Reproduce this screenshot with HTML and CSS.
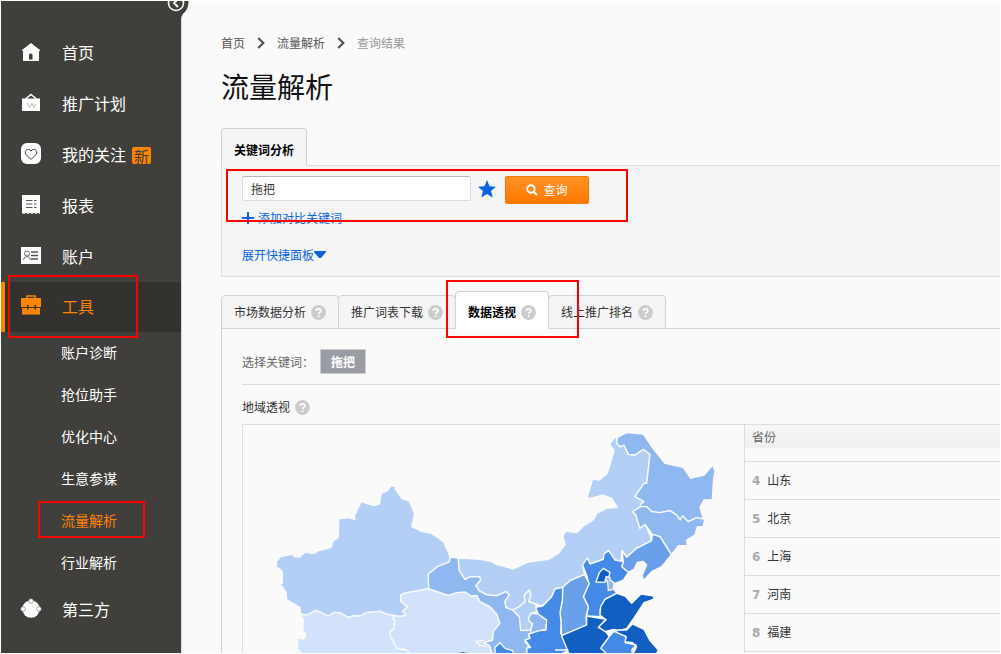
FILE: index.html
```html
<!DOCTYPE html>
<html lang="zh-CN">
<head>
<meta charset="utf-8">
<title>流量解析</title>
<link rel="stylesheet" href="styles.css">
</head>
<body>
<svg class="defs" aria-hidden="true">
  <symbol id="help" viewBox="0 0 15 15"><circle cx="7.500" cy="7.500" r="7.400" fill="#ccc"/><path d="M5.200 5.700C5.300 3.200 9.900 3.200 9.900 5.700C9.900 7.300 7.600 7.200 7.600 9M7.600 10.300V12" fill="none" stroke="#fff" stroke-width="1.600"/></symbol>
  <symbol id="chevron" viewBox="0 0 8 12"><path d="M1.200 1L6.300 6L1.200 11" fill="none" stroke="#555" stroke-width="2.200"/></symbol>
</svg>
<div class="app">
  <aside class="sidebar">
    <button class="collapse" aria-label="收起">
      <svg viewBox="0 0 30 19" width="30" height="19"><path d="M0 0H29.500C29.500 7 27 10 24 13Q22 15 22 19H0Z" fill="#403f3b"/><circle cx="17" cy="2" r="7.500" fill="none" stroke="#fff" stroke-width="1.600"/><path d="M19-2L15 2L19 6" fill="none" stroke="#fff" stroke-width="2"/></svg>
    </button>
    <nav>
      <ul class="menu">
        <li><a class="item" href="#"><svg class="icon" viewBox="0 0 22 22"><path d="M11 2L20 9V10H19V20H3V10H2V9Z" fill="#fff"/><path d="M9 18.500V13.500Q11 11.500 12.500 13.500V18.500Z" fill="#403f3b"/></svg><span>首页</span></a></li>
        <li><a class="item" href="#"><svg class="icon" viewBox="0 0 22 22"><path d="M5.500 7L11 2.500L16.500 7" fill="none" stroke="#fff" stroke-width="1.500"/><path d="M2 6.500H20V19H2Z" fill="#fff"/><path d="M7 11L9.500 15.500L12 11.500L14 15.500L16 12" fill="none" stroke="#b5b5b0"/></svg><span>推广计划</span></a></li>
        <li><a class="item" href="#"><svg class="icon" viewBox="0 0 22 22"><rect x="1" y="0" width="20" height="21" rx="6" fill="#fff"/><path d="M11 16.500L6 11.500C3.500 8 8 4 11 8C14 4 18.500 8 16 11.500Z" fill="none" stroke="#403f3b"/></svg><span>我的关注</span><span class="new">新</span></a></li>
        <li><a class="item" href="#"><svg class="icon" viewBox="0 0 22 22"><path d="M2 1H20V20L18 18.800L16 20L14 18.800L12 20L10 18.800L8 20L6 18.800L4 20L2 19Z" fill="#fff"/><path d="M6 6.500H12.500M6 10H12.500M6 13.500H12.500M14 6.500H16.500M14 10H16.500M14 13.500H16.500" stroke="#555"/></svg><span>报表</span></a></li>
        <li><a class="item" href="#"><svg class="icon" viewBox="0 0 22 22"><path d="M1 2H21V19H1Z" fill="#fff"/><circle cx="7" cy="8.500" r="2.500" fill="none" stroke="#666"/><path d="M3.500 15Q4 11.500 7 11.500T10.500 15" fill="none" stroke="#666"/><path d="M11 7H18M11 10.500H18M11 14H18" stroke="#555" stroke-width="1.300"/></svg><span>账户</span></a></li>
        <li><a class="item current" href="#"><svg class="icon" viewBox="0 0 22 22"><path d="M7 4V1H15V4" fill="none" stroke="#ff8400" stroke-width="1.500"/><path d="M1 3H21V12H16V10H14.500V12H8.500V10H7V12H1ZM2 13H7V14.500H8.500V13H14.500V14.500H16V13H20V19.500H2Z" fill="#ff8400"/></svg><span>工具</span></a>
          <ul class="submenu">
            <li><a href="#">账户诊断</a></li>
            <li><a href="#">抢位助手</a></li>
            <li><a href="#">优化中心</a></li>
            <li><a href="#">生意参谋</a></li>
            <li><a class="on" href="#">流量解析</a></li>
            <li><a href="#">行业解析</a></li>
          </ul>
        </li>
        <li><a class="item" href="#"><svg class="icon" viewBox="0 0 22 22"><circle cx="11" cy="11" r="8.700" fill="#fff"/><g fill="#fff" stroke="#777" stroke-width=".6"><circle cx="11" cy="3" r="2.300"/><circle cx="3" cy="11" r="2.300"/><circle cx="19" cy="11" r="2.300"/></g></svg><span>第三方</span></a></li>
      </ul>
    </nav>
  </aside>

  <main class="main">
    <nav class="crumbs">
      <a href="#">首页</a><svg width="8" height="12"><use href="#chevron"/></svg><a href="#">流量解析</a><svg width="8" height="12"><use href="#chevron"/></svg><span>查询结果</span>
    </nav>
    <h1>流量解析</h1>

    <button class="tab-main">关键词分析</button>
    <section class="search">
      <form class="query">
        <input type="text" value="拖把" aria-label="关键词">
        <svg class="star" viewBox="0 0 18 18"><path d="M9 0L11.500 6.300L18 6.700L13 10.900L14.700 17.500L9 13.900L3.300 17.500L5 10.900L0 6.700L6.500 6.300Z" fill="#0a63e0"/></svg>
        <button type="button" class="go"><svg width="12" height="12" viewBox="0 0 12 12"><circle cx="5" cy="5" r="3.700" fill="none" stroke="#fff" stroke-width="2"/><path d="M7.500 7.500L11 11" stroke="#fff" stroke-width="2.200"/></svg>查询</button>
      </form>
      <a class="add" href="#"><svg width="12" height="12" viewBox="0 0 12 12"><path d="M6 0V12M0 6H12" stroke="#0a63e0" stroke-width="2"/></svg>添加对比关键词</a>
      <a class="expand" href="#">展开快捷面板<svg width="12" height="8" viewBox="0 0 12 8"><path d="M0 0H12V1L7 7H5L0 1Z" fill="#0a63e0"/></svg></a>
    </section>

    <div class="tabs">
      <button>市场数据分析<svg><use href="#help"/></svg></button>
      <button>推广词表下载<svg><use href="#help"/></svg></button>
      <button class="active">数据透视<svg><use href="#help"/></svg></button>
      <button>线上推广排名<svg><use href="#help"/></svg></button>
    </div>
    <section class="panel">
      <div class="choose"><span>选择关键词：</span><button>拖把</button></div>
      <h2>地域透视<svg><use href="#help"/></svg></h2>
      <div class="region">
        <div class="mapbox">
          <svg class="map" viewBox="9 15 1500 684" role="img" aria-label="中国地图">
            <g transform="translate(720 0)" stroke="#fafafa" stroke-width="4" stroke-linejoin="round">
              <path fill="#b3cff5" d="M-539 582L-520 586L-492 571L-478 577L-455 588L-437 577L-418 579L-395 593L-380 588L-360 588L-340 578L-300 574L-275 584L-254 587L-240 590L-222 585L-232 574L-218 561L-238 543L-238 526L-228 520L-154 506L-155 462L-128 440L-92 426L-89 411L-110 364L-145 340L-175 334L-205 320L-196 282L-212 243L-234 236L-254 207L-253 200L-267 197L-278 213L-296 219L-302 252L-320 257L-356 244L-377 288L-375 298L-395 293L-432 297L-424 300L-425 352L-442 364L-446 382L-485 392L-500 401L-525 396L-540 411L-558 410L-562 402L-598 410L-610 424L-612 442L-602 445L-593 456L-593 490L-608 494L-596 497L-581 518L-581 538L-540 563Z"/>
              <path fill="#d2e2fb" d="M-539 582L-520 586L-492 571L-478 577L-455 588L-437 577L-418 579L-395 593L-380 588L-360 588L-340 578L-300 574L-275 584L-254 587L-262 596L-255 600L-260 628L-270 634L-270 645L-250 684L-220 690L-205 710H-530L-548 686L-546 660L-550 652L-532 657L-524 654L-524 640L-532 630L-530 600Z"/>
              <path fill="#d2e2fb" d="M-154 506L-95 526L-70 518L-45 516L-25 528L-10 526L0 545L30 562L50 582L60 610L45 635L40 660L12 668L30 678L35 710H-205L-220 690L-250 684L-270 645L-270 634L-260 628L-255 600L-262 596L-254 587L-240 590L-222 585L-232 574L-218 561L-238 543L-238 526L-228 520Z"/>
              <path fill="#8fb7f0" d="M-89 411L-65 414L-63 450L-45 478L-30 470L0 470L2 480L-12 497L-2 512L20 524L50 527L78 514L88 524L75 545L78 562L98 570L118 590L125 630L155 625L200 632L145 642L150 660L135 665L145 675L138 710H40L28 676L12 668L38 660L40 635L60 610L50 582L30 560L0 545L-10 526L-25 528L-45 516L-70 518L-95 526L-154 506L-155 462L-128 440L-92 426Z"/>
              <path fill="#b3cff5" d="M-65 414L-63 450L-45 478L-30 470L0 470L2 480L-12 497L-2 512L20 524L50 527L78 514L88 524L75 545L78 562L98 570L118 560L135 545L133 525L148 510L152 525L146 545L165 552L188 558L215 530L225 507L248 502L270 482L313 464L308 435L322 414L330 432L370 418L372 402L386 392L405 420L423 424L426 392L440 412L470 385L515 362L510 345L495 313L480 325L472 300L468 285L458 275L480 265L482 255L492 245L465 230L492 190H500L510 103L490 88L465 105L445 103L432 75L420 80L410 70L412 54L405 52L388 72L402 92L385 150L380 162L358 180L338 177L322 230L328 236L370 225L395 235L412 262L380 265L350 280L340 300L310 318L290 338L258 333L248 348L256 373L235 400L205 418L145 426L100 447L50 433L30 423L0 418Z"/>
              <path fill="#b3cff5" d="M98 570L118 560L135 545L133 525L148 510L152 525L146 545L167 552L170 575L152 580L145 600L158 612L152 630L122 632L118 590Z"/>
              <path fill="#8fb7f0" d="M152 580L175 582L200 600L198 630L178 632L155 642L152 630L158 612L145 600Z"/>
              <path fill="#8fb7f0" d="M412 52L440 38L490 42L515 80L555 130L610 142L632 175L672 165L698 136L705 152L700 185L697 240H672L660 262L670 297L650 293L625 305L608 288L600 300L590 285L570 272L540 278L515 275L500 260H482V252L492 245L465 230L492 190H500L510 103L490 88L465 105L445 103L432 75L420 80L410 70Z"/>
              <path fill="#8fb7f0" d="M482 260H500L515 275L540 278L570 272L590 285L600 300L608 288L625 305L650 293L674 298L670 320L652 320L645 345L620 360L622 376L595 377L574 404L540 350L517 343L495 313L480 325L472 300L468 285L458 275Z"/>
              <path fill="#6aa0ea" d="M517 343L540 350L574 404L545 440L515 455L490 482L487 465L500 435L490 424L472 427L462 448L445 457L425 440L430 425L426 392L440 412L470 385L515 362Z"/>
              <path fill="#458ae6" d="M308 435L322 414L330 432L370 418L372 402L386 392L405 420L430 425L425 440L445 457L430 480L405 490L402 508L410 520L375 538L360 570L362 590L320 588L325 560L310 530L325 495L322 470Z"/>
              <path fill="#125fc2" d="M370 445L390 457L386 472L376 478L375 487L348 486L358 458Z"/>
              <path fill="#8fb7f0" d="M378 470L390 472V480L402 488L400 508L385 512L383 485L378 480Z"/>
              <path fill="#6aa0ea" d="M248 502L270 482L313 464L328 490L310 530L325 560L318 590L320 615L245 647L243 605L240 578L247 540Z"/>
              <path fill="#458ae6" d="M225 507L248 502L247 540L240 578L243 605L242 640L265 692L225 710H142L140 685L152 682L135 660L150 655L147 642L178 632L198 630L200 600L175 582L167 562L188 558L215 530Z"/>
              <path fill="#125fc2" d="M410 520L435 528L455 550L483 522L522 528L520 538L492 548L460 597L440 625L420 632L400 628L375 635L355 620L378 600L360 585L362 560L375 538Z"/>
              <path fill="#125fc2" d="M320 588L378 598L355 622L378 636L388 650L365 680L390 710H270L245 647L320 615Z"/>
              <path fill="#125fc2" d="M440 630L457 612L492 628L510 662L535 690L525 710H455L470 680L458 668L435 665L438 650L402 634L420 630Z"/>
              <path fill="#458ae6" d="M402 634L438 650L435 668L468 675L455 690L460 710H390L362 685L388 650Z"/>
              <path fill="#458ae6" d="M45 682L60 668L75 685L98 692L105 710H45Z"/>
              <path fill="#125fc2" stroke-width="2" d="M-75 705Q-50 685-30 705Z"/>
              <path fill="none" d="M12 660L-12 665L0 676L20 679M225 690H265"/>
            </g>
          </svg>
        </div>
        <table class="rank">
          <thead><tr><th>省份</th></tr></thead>
          <tbody>
            <tr class="gap"><td></td></tr>
            <tr><td><b>4</b>山东</td></tr>
            <tr><td><b>5</b>北京</td></tr>
            <tr><td><b>6</b>上海</td></tr>
            <tr><td><b>7</b>河南</td></tr>
            <tr><td><b>8</b>福建</td></tr>
            <tr><td></td></tr>
          </tbody>
        </table>
      </div>
    </section>
  </main>
</div>
</body>
</html>
```
FILE: styles.css
```css
*, *::after { box-sizing: border-box; }
body {
  margin: 0;
  padding: 1px;
  height: 100vh;
  overflow: hidden;
  background: #fff;
  font: 12px/18px "Noto Sans CJK SC", sans-serif;
  color: #333;
}
button, input { font: inherit; color: inherit; }
button { cursor: pointer; }
a { color: inherit; text-decoration: none; }
ul { list-style: none; margin: 0; padding: 0; }
svg { flex: none; }
.defs { position: absolute; width: 0; height: 0; }
.app { display: flex; height: 100%; overflow: hidden; background: #fafafa; }

/* sidebar */
.sidebar {
  position: relative;
  flex: none;
  width: 180px;
  padding-top: 26px;
  background: #403f3b;
  color: #fff;
  box-shadow: 1px 0 1px #ddd;
}
.collapse {
  position: absolute;
  top: 0;
  right: -8px;
  padding: 0;
  border: 0;
  background: none;
  line-height: 0;
}
.item {
  position: relative;
  display: flex;
  align-items: center;
  height: 51px;
  padding: 0 0 2px 19px;
  font-size: 16px;
}
.icon { width: 22px; height: 22px; margin-right: 20px; }
.new {
  margin: 4px 0 0 6px;
  padding: 0 2px;
  border-radius: 2px;
  background: #ff8400;
  color: #403f3b;
  font-size: 15px;
  line-height: 17px;
}
.item.current {
  height: 50px;
  padding-left: 15px;
  border-left: 4px solid #ff8400;
  background: #34322e;
  color: #ff8400;
}
.item.current::after, .submenu .on::after, .search::after, .tabs .active::after {
  content: "";
  position: absolute;
  border: 2px solid #f00;
  pointer-events: none;
}
.item.current::after { left: 3px; top: -7px; width: 130px; height: 63px; }
.submenu a {
  position: relative;
  display: flex;
  align-items: center;
  height: 42px;
  padding: 0 0 3px 60px;
  font-size: 14px;
}
.submenu .on { color: #ff8400; }
.submenu .on::after { left: 37px; top: 1px; width: 107px; height: 37px; }

/* main column */
.main { flex: 1; min-width: 0; padding: 33px 0 0 40px; }
.crumbs { display: flex; align-items: center; gap: 12px; color: #555; }
.crumbs span { color: #999; }
h1 { margin: 14px 0 22px; font-size: 28px; font-weight: 400; line-height: 40px; color: #111; }
.tab-main {
  position: relative;
  z-index: 1;
  display: block;
  height: 38px;
  margin-bottom: -1px;
  padding: 4px 12px 0;
  border: 1px solid #d2d2d2;
  border-bottom: 0;
  border-radius: 4px 4px 0 0;
  background: #f5f5f5;
  color: #000;
  font-weight: 700;
}
.search {
  position: relative;
  height: 112px;
  padding: 10px 20px;
  border: 1px solid #ddd;
  border-right: 0;
  background: #f5f5f5;
}
.search::after { left: 4px; top: 3px; width: 402px; height: 53px; }
.query { display: flex; align-items: flex-start; }
.query input {
  width: 229px;
  height: 25px;
  padding: 0 8px;
  border: 1px solid #ddd;
  border-top-color: #bbb;
  border-radius: 2px;
  background: #fff;
  outline: 0;
}
.star { width: 18px; height: 18px; margin: 4px 9px 0 7px; }
.go {
  display: flex;
  align-items: center;
  justify-content: center;
  gap: 5px;
  width: 84px;
  height: 28px;
  border: 1px solid #f57900;
  border-radius: 2px;
  background: linear-gradient(#ff9227, #ff7800);
  color: #fff;
}
.add, .expand { display: flex; align-items: center; width: max-content; color: #0a63e0; }
.add { gap: 4px; margin: 5px 0 19px; }

/* report tabs */
.tabs { position: relative; z-index: 1; display: flex; align-items: flex-end; margin: 14px 0 -1px; }
.tabs button {
  position: relative;
  display: flex;
  align-items: center;
  gap: 5px;
  height: 34px;
  margin-right: -1px;
  padding: 0 12px;
  border: 1px solid #d2d2d2;
  border-radius: 4px 4px 0 0;
  background: #f5f5f5;
}
.tabs svg { width: 15px; height: 15px; }
.tabs .active {
  z-index: 1;
  height: 38px;
  padding-top: 4px;
  border-bottom-color: #fff;
  background: #fff;
  color: #000;
  font-weight: 700;
}
.tabs .active::after { left: -10px; top: -12px; width: 133px; height: 58px; }
.panel { padding: 20px 0 0 20px; border: 1px solid #d2d2d2; border-width: 1px 0 0 1px; }
.choose {
  display: flex;
  align-items: center;
  height: 36px;
  padding-bottom: 10px;
  border-bottom: 1px solid #ddd;
  color: #666;
}
.choose span { width: 78px; }
.choose button {
  height: 25px;
  padding: 0 10px;
  border: 1px solid #ccc;
  background: #9b9da5;
  color: #fff;
  font-weight: 700;
}
h2 { display: flex; align-items: center; gap: 5px; margin: 13px 0 8px; font-size: 12px; font-weight: 400; }
h2 svg { width: 15px; height: 15px; }
.region { display: flex; align-items: flex-start; border: 1px solid #ddd; border-right: 0; }
.mapbox { flex: none; width: 501px; min-height: 300px; }
.map { display: block; width: 500px; }
.rank { flex: 1; border-collapse: collapse; }
.rank th, .rank td { padding: 0 7px; border-left: 1px solid #ddd; text-align: left; }
.rank th { height: 23px; background: linear-gradient(#f7f7f7, #eee); color: #666; font-weight: 400; }
.rank td { height: 38px; border-top: 1px solid #ddd; }
.rank .gap td { height: 13px; border-top: 0; }
.rank b { margin-right: 7px; color: #aaa; font-family: "DejaVu Sans", sans-serif; font-size: 12px; }
```
